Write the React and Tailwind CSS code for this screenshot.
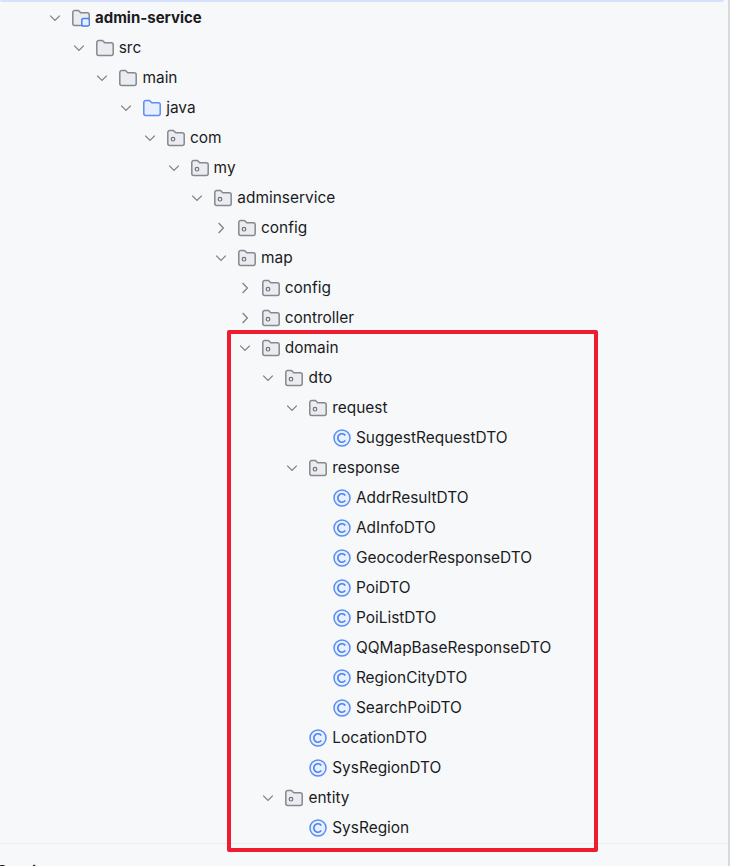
import React from "react";

const rows = [
  { d: 0, name: "admin-service", type: "module", open: true, bold: true },
  { d: 1, name: "src", type: "folder", open: true },
  { d: 2, name: "main", type: "folder", open: true },
  { d: 3, name: "java", type: "source", open: true },
  { d: 4, name: "com", type: "pkg", open: true },
  { d: 5, name: "my", type: "pkg", open: true },
  { d: 6, name: "adminservice", type: "pkg", open: true },
  { d: 7, name: "config", type: "pkg", open: false },
  { d: 7, name: "map", type: "pkg", open: true },
  { d: 8, name: "config", type: "pkg", open: false },
  { d: 8, name: "controller", type: "pkg", open: false },
  { d: 8, name: "domain", type: "pkg", open: true },
  { d: 9, name: "dto", type: "pkg", open: true },
  { d: 10, name: "request", type: "pkg", open: true },
  { d: 11, name: "SuggestRequestDTO", type: "class" },
  { d: 10, name: "response", type: "pkg", open: true },
  { d: 11, name: "AddrResultDTO", type: "class" },
  { d: 11, name: "AdInfoDTO", type: "class" },
  { d: 11, name: "GeocoderResponseDTO", type: "class" },
  { d: 11, name: "PoiDTO", type: "class" },
  { d: 11, name: "PoiListDTO", type: "class" },
  { d: 11, name: "QQMapBaseResponseDTO", type: "class" },
  { d: 11, name: "RegionCityDTO", type: "class" },
  { d: 11, name: "SearchPoiDTO", type: "class" },
  { d: 10, name: "LocationDTO", type: "class" },
  { d: 10, name: "SysRegionDTO", type: "class" },
  { d: 9, name: "entity", type: "pkg", open: true },
  { d: 10, name: "SysRegion", type: "class" },
];

const folderPath = "M.8 3.4A2 2 0 0 1 2.8 1.4h3.6l2.4 2.4h6.4a2 2 0 0 1 2 2v8.8a2 2 0 0 1-2 2H2.8a2 2 0 0 1-2-2z";

const Chevron = ({ open }) => (
  <svg width="12" height="12" viewBox="0 0 12 12" fill="none" stroke="#7e828b" strokeWidth="1.3" className="shrink-0">
    {open ? <path d="M1.2 3.6 6 8.4l4.8-4.8" /> : <path d="M3.6 1 8.4 6 3.6 11" />}
  </svg>
);

const Icon = ({ type }) => {
  if (type === "class") {
    return (
      <svg width="18" height="18" viewBox="0 0 18 18" fill="none" className="shrink-0">
        <circle cx="9" cy="9" r="8" fill="#e8efff" stroke="#5a8ef0" strokeWidth="1.5" />
        <path d="M12.3 6.4a4.2 4.2 0 1 0 0 5.2" stroke="#4a82f0" strokeWidth="1.6" />
      </svg>
    );
  }
  if (type === "module") {
    return (
      <svg width="18" height="18" viewBox="0 0 18 18" fill="none" className="shrink-0">
        <path d={folderPath} fill="#ebecf0" stroke="#85888f" strokeWidth="1.5" />
        <rect x="9.8" y="9.4" width="7.6" height="7.6" rx="1.8" fill="#e6eeff" stroke="#4a82f0" strokeWidth="1.5" />
      </svg>
    );
  }
  const blue = type === "source";
  return (
    <svg width="18" height="18" viewBox="0 0 18 18" fill="none" className="shrink-0">
      <path d={folderPath} fill={blue ? "#e6eeff" : "#ebecf0"} stroke={blue ? "#5a8ef0" : "#85888f"} strokeWidth="1.5" />
      {type === "pkg" && <circle cx="6" cy="10.2" r="1.8" stroke="#6f737c" strokeWidth="1.2" />}
    </svg>
  );
};

const Row = ({ row }) => (
  <div className="flex h-[30px] items-center" style={{ paddingLeft: 49 + row.d * 23.72 }}>
    <div className="flex w-[23px] shrink-0 items-center">{row.type !== "class" && <Chevron open={row.open} />}</div>
    <Icon type={row.type} />
    <span className={"ml-[5px] whitespace-nowrap " + (row.bold ? "text-[15px] font-bold" : "")}>{row.name}</span>
  </div>
);

export default function App() {
  return (
    <div className="relative h-[866px] w-[730px] overflow-hidden bg-[#f7f8fa] font-['Inter',sans-serif] text-[15.45px] text-[#1a1c22]">
      <div className="mb-px h-[2px] w-[724px] rounded-b bg-[#d5e1ff]" />
      {rows.map((row, i) => (
        <Row key={i} row={row} />
      ))}
      <div className="ml-[-3px] border-t border-[#ebecf0] pt-[16px] font-bold">Services</div>
      {/* red annotation drawn over the tree */}
      <div className="absolute left-[227px] top-[330px] h-[522px] w-[371px] rounded-[2px] border-[4px] border-[#ee1c2e]" />
      <div className="absolute right-0 top-0 h-full w-[2px] bg-[#d9d9d9]" />
    </div>
  );
}
